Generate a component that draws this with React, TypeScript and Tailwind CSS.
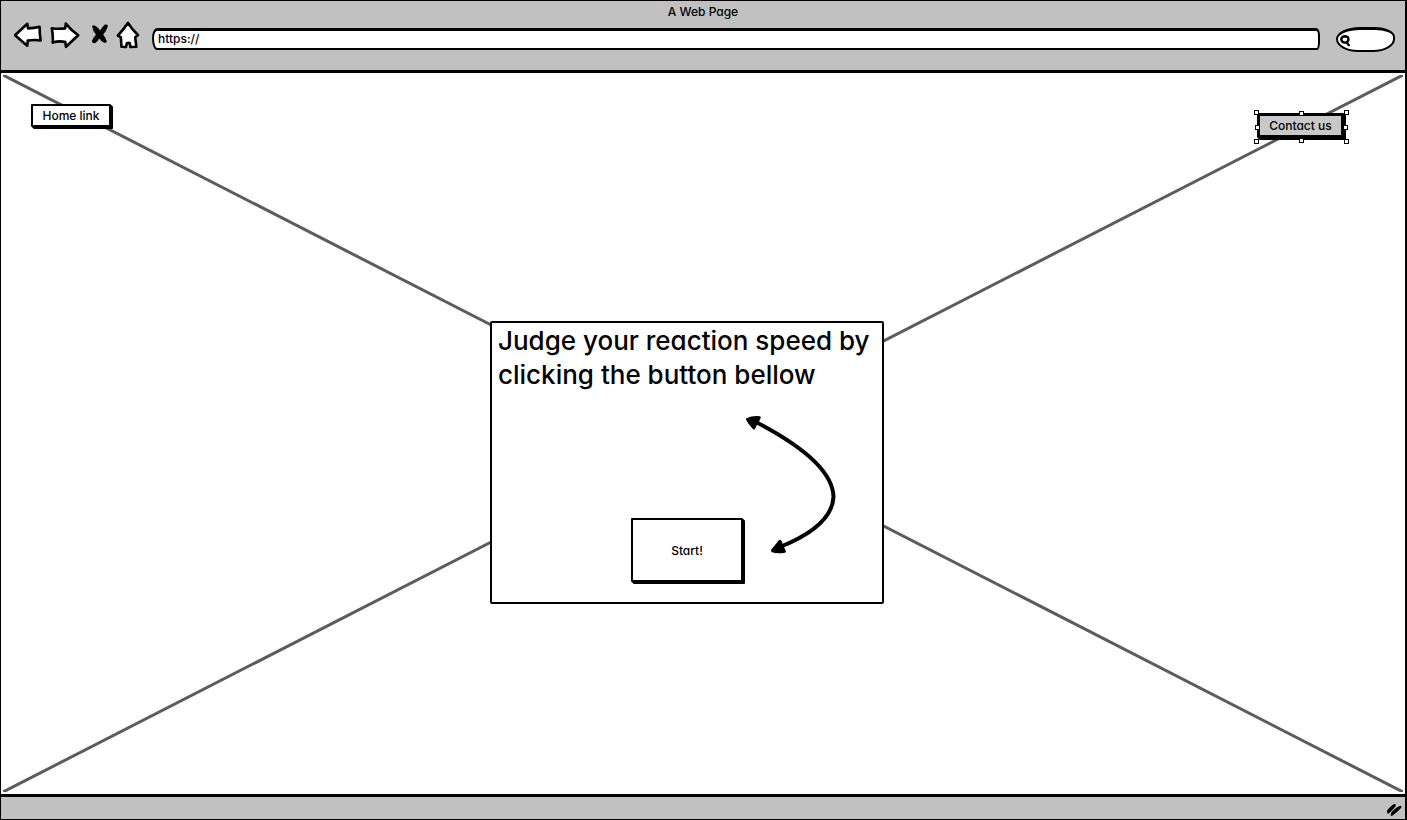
import React from "react";

const box = "border-black rounded-[1px] text-[12px] font-medium text-black shadow-[1px_1px_0_#000,2px_2px_0_#000]";

const handles = [
  "-left-[3px] -top-[3px]",
  "left-[42px] -top-[2px]",
  "-right-[5px] -top-[3px]",
  "-left-[2px] top-[12px]",
  "-right-[4px] top-[12px]",
  "-left-[3px] -bottom-[6px]",
  "left-[42px] -bottom-[5px]",
  "-right-[5px] -bottom-[6px]",
];

function BrowserButton({ label, viewBox, className, children }: { label: string; viewBox: string; className: string; children: React.ReactNode }) {
  return (
    <button type="button" aria-label={label} className="shrink-0">
      <svg viewBox={viewBox} className={className} fill="white" stroke="black" strokeWidth="2.6" strokeLinejoin="round" strokeLinecap="round">
        {children}
      </svg>
    </button>
  );
}

function BrowserBar() {
  return (
    <header className="border-b-3 border-black bg-[#c1c1c1] pb-[13px]">
      <h1 className="pt-[2px] text-center text-[12px] leading-[18px] font-medium">A Web Page</h1>
      <div className="flex items-center gap-4 pr-[10px] pl-[13px]">
        <div className="flex flex-1 items-center gap-3">
          <nav aria-label="Browser" className="flex gap-2">
            <BrowserButton label="Back" viewBox="14 21 28 36" className="h-9 w-7">
              <path d="M15 35.2 27.3 23.8 28 28.4Q34 28.2 39.6 26.8 39.6 34 40.6 40.4 34 39.5 27.8 40.5L27.2 45.8Q21 40.4 15 35.2Z" />
            </BrowserButton>
            <BrowserButton label="Forward" viewBox="50 21 30 36" className="h-9 w-[30px]">
              <path d="M51.8 28.2Q58 29.3 65.2 28.4L65.8 23.6Q71 30 78.2 35.3L66 46.8 65.3 42Q59 40.5 52.7 42.6 53.2 35 51.8 28.2Z" />
            </BrowserButton>
            <BrowserButton label="Stop" viewBox="88 21 20 36" className="h-9 w-5">
              <path fill="black" stroke="none" d="M92.2 26.4Q92.5 24.6 94.8 25.6 98.4 27.8 100.2 30.6 102.4 26.6 105 24.6 107.8 24 107.9 26 106.5 31 103.2 34.4 106 38.2 106.9 41.4 106.4 43.4 103.6 42.6 101 41 99.2 38.4 97.6 41.5 95.4 43 92.4 43.6 91.8 41.6 93 37.5 96 34.4 92.6 30.8 92.2 26.4Z" />
            </BrowserButton>
            <BrowserButton label="Home" viewBox="116 21 24 36" className="h-9 w-6">
              <path d="M128 22.8Q132 29.5 138 35L135.2 37.2 136.3 46.8 130.4 47 129.8 43.2Q128 42.4 126.8 43.4L126 47 121.5 46.8 120.8 37.2 117.8 35.6Q124 29 128 22.8Z" />
            </BrowserButton>
          </nav>
          <input
            type="text"
            aria-label="Address"
            defaultValue="https://"
            className="h-[22px] min-w-0 flex-1 rounded-[5px_4px_3px_5px/10px_7px_8px_12px] border-[2px] border-t-[3px] border-black bg-white px-1 pb-[3px] text-[12px] font-medium outline-none"
          />
        </div>
        <label className="flex h-[25px] w-[59px] items-center overflow-hidden rounded-[24px_20px_22px_22px/12px_10px_13px_13px] border-[2px] border-t-3 border-black bg-white">
          <svg viewBox="0 0 12 14" className="ml-px h-[14px] w-3 shrink-0" fill="none" stroke="black" strokeWidth="2.4" strokeLinecap="round">
            <path d="M2.2 6Q3 3.2 6 3.2 9.8 3.4 9.4 6.6 9 9.6 6 9.6 2.4 9.6 2.2 6ZM8 9.4Q8.6 11 9.8 12.2" />
          </svg>
          <input type="text" aria-label="Search" className="w-8 bg-transparent text-[12px] outline-none" />
        </label>
      </div>
    </header>
  );
}

function ReactionCard() {
  return (
    <section className="relative flex h-[283px] w-[394px] flex-col items-center justify-between rounded-[2px] border-2 border-black bg-white pt-px pb-5">
      <h2 className="w-full pl-[6px] text-[26px] leading-[34px] font-medium whitespace-nowrap">
        Judge your reaction speed by
        <br />
        clicking the button bellow
      </h2>
      <button type="button" className={`${box} h-[64px] w-[112px] border-2 bg-white pt-[2px]`}>
        Start!
      </button>
      <svg aria-hidden="true" viewBox="740 410 100 148" className="absolute top-[87px] left-[248px] h-[148px] w-[100px]">
        <path d="M756 422Q833 462 833.5 497Q832 526 780 547" fill="none" stroke="black" strokeWidth="4" />
        <path d="M746.5 418.2Q752 415.5 760 416.2Q761.5 416.4 760.4 418.6L759 421.5Q756 426.5 754.8 429.3Q753.5 430 752.4 428.4Q748.5 424.5 746.2 420Q745.5 419 746.5 418.2Z" />
        <path d="M771 550Q775.5 544.5 779 540Q780.5 539 781.6 541Q783 545.5 786 551.2Q786 552.8 784 553Q776 554 772 552.2Q770.8 551.5 771 550Z" />
      </svg>
    </section>
  );
}

export default function App() {
  return (
    <div className="flex min-h-screen flex-col border-t border-r-2 border-b border-l border-black bg-white font-['Inter',sans-serif] text-black [font-feature-settings:'cv11']">
      <BrowserBar />
      <main className="relative flex flex-1 flex-col px-[30px] pt-[31px] pb-6">
        <svg aria-hidden="true" viewBox="0 0 100 100" preserveAspectRatio="none" className="absolute inset-x-[2px] inset-y-[2px] h-[calc(100%-4px)] w-[calc(100%-4px)]">
          <path d="M0 0 100 100M0 100 100 0" stroke="#5c5c5c" strokeWidth="3" vectorEffect="non-scaling-stroke" />
        </svg>
        <nav aria-label="Site" className="relative flex items-start justify-between pr-[31px]">
          <a href="#home" className={`${box} w-20 border-2 bg-white text-center leading-[19px]`}>
            Home link
          </a>
          <div className="relative mt-[9px]">
            <a href="#contact" className={`${box} block w-[87px] border-3 bg-[#c8c8c8] text-center leading-[19px]`}>
              Contact us
            </a>
            {handles.map((place) => (
              <span key={place} className={`absolute size-[5px] border border-black bg-white ${place}`} />
            ))}
          </div>
        </nav>
        <div className="relative mt-[183px] flex justify-center pr-8">
          <ReactionCard />
        </div>
      </main>
      <footer className="flex h-[25px] items-center justify-end border-t-3 border-black bg-[#c1c1c1] pr-[2px]">
        <svg aria-label="Resize" viewBox="0 0 18 16" className="mt-0.5 h-4 w-[18px]">
          <path d="M2 12Q1 10.5 3 8.2Q7 3.8 9.6 3Q11.4 3.2 10.4 5.4Q7 9.8 4 12.2Q3 12.8 2 12ZM5.6 14.4Q4.8 12.4 7.4 10.2Q12 5.8 15.4 4.8Q17.2 5 16 7Q12 11.6 7.6 14.6Q6.4 15.2 5.6 14.4Z" />
        </svg>
      </footer>
    </div>
  );
}
